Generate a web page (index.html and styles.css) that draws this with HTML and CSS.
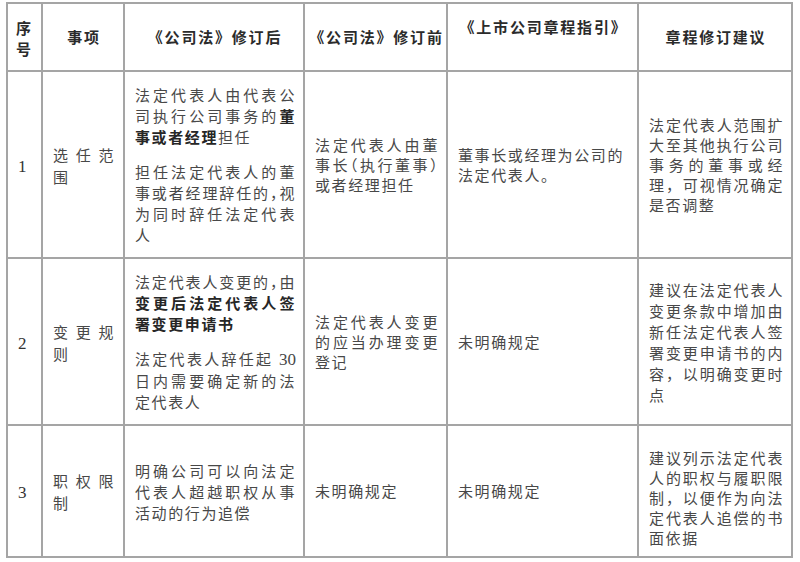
FILE: index.html
```html
<!DOCTYPE html>
<html lang="zh-CN">
<head>
<meta charset="utf-8">
<title>法定代表人章程修订对照</title>
<link rel="stylesheet" href="styles.css">
</head>
<body>
<table class="grid">
<colgroup>
<col class="c-no"><col class="c-item"><col class="c-after"><col class="c-before"><col class="c-guide"><col class="c-advice">
</colgroup>
<thead>
<tr class="r-head">
<th class="th-no">序<br>号</th>
<th>事项</th>
<th>《公司法》修订后</th>
<th>《公司法》修订前</th>
<th class="th-top">《上市公司章程指引》</th>
<th>章程修订建议</th>
</tr>
</thead>
<tbody>
<tr class="r1">
<td class="no">1</td>
<td class="item"><span class="ln j">选任范</span><span class="ln">围</span></td>
<td class="after">
<p class="para"><span class="ln j">法定代表人由代表公</span><span class="ln j">司执行公司事务的<b class="em">董</b></span><span class="ln"><b class="em">事或者经理</b>担任</span></p>
<p class="para"><span class="ln j">担任法定代表人的董</span><span class="ln j">事或者经理辞任的<span class="hw">，</span>视</span><span class="ln j">为同时辞任法定代表</span><span class="ln">人</span></p>
</td>
<td><span class="ln j">法定代表人由董</span><span class="ln j">事长<span class="hw">（</span>执行董事<span class="hw">）</span></span><span class="ln">或者经理担任</span></td>
<td><span class="ln">董事长或经理为公司的</span><span class="ln">法定代表人。</span></td>
<td><span class="ln j">法定代表人范围扩</span><span class="ln j">大至其他执行公司</span><span class="ln j">事务的董事或经</span><span class="ln j">理，可视情况确定</span><span class="ln">是否调整</span></td>
</tr>
<tr class="r2">
<td class="no">2</td>
<td class="item"><span class="ln j">变更规</span><span class="ln">则</span></td>
<td class="after">
<p class="para"><span class="ln j">法定代表人变更的<span class="hw">，</span>由</span><span class="ln j"><b class="em">变更后法定代表人签</b></span><span class="ln"><b class="em">署变更申请书</b></span></p>
<p class="para"><span class="ln j">法定代表人辞任起 <span class="num">30</span></span><span class="ln j">日内需要确定新的法</span><span class="ln">定代表人</span></p>
</td>
<td><span class="ln j">法定代表人变更</span><span class="ln j">的应当办理变更</span><span class="ln">登记</span></td>
<td><span class="ln">未明确规定</span></td>
<td class="loose"><span class="ln j">建议在法定代表人</span><span class="ln j">变更条款中增加由</span><span class="ln j">新任法定代表人签</span><span class="ln j">署变更申请书的内</span><span class="ln j">容，以明确变更时</span><span class="ln">点</span></td>
</tr>
<tr class="r3">
<td class="no">3</td>
<td class="item"><span class="ln j">职权限</span><span class="ln">制</span></td>
<td class="after">
<p class="para"><span class="ln j">明确公司可以向法定</span><span class="ln j">代表人超越职权从事</span><span class="ln">活动的行为追偿</span></p>
</td>
<td><span class="ln">未明确规定</span></td>
<td><span class="ln">未明确规定</span></td>
<td class="low"><span class="ln j">建议列示法定代表</span><span class="ln j">人的职权与履职限</span><span class="ln j">制，以便作为向法</span><span class="ln j">定代表人追偿的书</span><span class="ln">面依据</span></td>
</tr>
</tbody>
</table>
</body>
</html>
```

FILE: styles.css
```css
html, body {
  margin: 0;
  padding: 0;
  background: #ffffff;
}

body {
  font-family: "Noto Sans CJK SC", "Noto Sans", sans-serif;
  color: #484848;
}

.grid {
  border-collapse: collapse;
  table-layout: fixed;
  width: 787px;
  margin: 2px 0 0 6px;
}

.c-no { width: 35px; }
.c-item { width: 82px; }
.c-after { width: 180px; }
.c-before { width: 143px; }
.c-guide { width: 191px; }
.c-advice { width: 154px; }

.grid th,
.grid td {
  border: 2px solid #a5a5a5;
  padding: 0 7px 0 10px;
  vertical-align: middle;
  font-size: 15px;
  line-height: 20px;
  letter-spacing: 1.6px;
  text-align: left;
}

.grid th {
  font-weight: 700;
  color: #2b2b2b;
  text-align: center;
  letter-spacing: 1.8px;
  white-space: nowrap;
  padding: 0 0 0 2px;
}

.grid th.th-no {
  padding: 0;
  line-height: 21px;
  padding-top: 2px;
}

.grid th.th-top {
  padding-bottom: 20px;
}

.r-head { height: 68px; }
.r1 { height: 187px; }
.r2 { height: 167px; }
.r3 { height: 132px; }

.grid td.no {
  font-family: "Liberation Serif", serif;
  font-size: 17px;
  letter-spacing: 0;
  padding-left: 10px;
  padding-top: 4px;
  color: #333333;
}

.ln {
  display: block;
  white-space: nowrap;
}

.j {
  text-align: justify;
  text-align-last: justify;
}

.item .ln {
  line-height: 22px;
}

.grid td.item {
  padding-right: 8px;
  padding-top: 2px;
}

.after .ln {
  line-height: 21px;
}

.loose .ln {
  line-height: 21px;
}

.para {
  margin: 0;
}

.para + .para {
  margin-top: 14px;
}

.em {
  font-weight: 700;
  color: #262626;
}

.hw {
  font-feature-settings: "halt";
}

.num {
  font-family: "Liberation Serif", serif;
  font-size: 17px;
  letter-spacing: 0;
}

.grid td.low {
  padding-top: 14px;
}
```
